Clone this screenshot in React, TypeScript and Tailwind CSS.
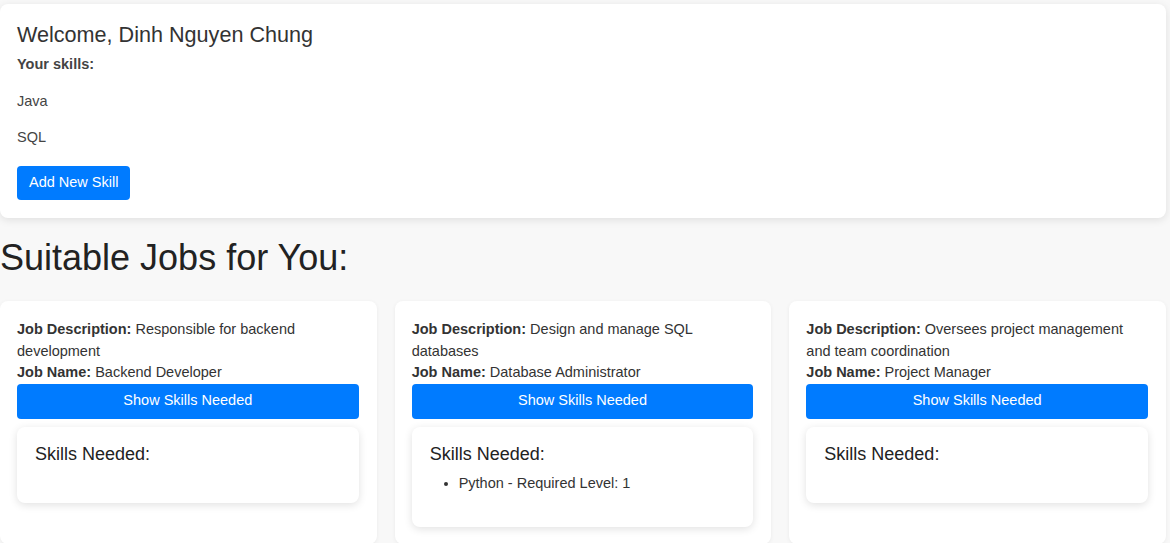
import React from "react";

interface Job {
  description: string;
  name: string;
  skills: { name: string; level: number }[];
}

const jobs: Job[] = [
  { description: "Responsible for backend development", name: "Backend Developer", skills: [] },
  { description: "Design and manage SQL databases", name: "Database Administrator", skills: [{ name: "Python", level: 1 }] },
  { description: "Oversees project management and team coordination", name: "Project Manager", skills: [] },
];

function JobCard({ job }: { job: Job }) {
  return (
    <div className="bg-white rounded-lg pl-[17px] pr-[18px] pt-[18px] pb-[17px] shadow-[0_1px_4px_rgba(0,0,0,0.06)]">
      <p className="text-[14.5px] leading-[21.5px] text-[#333]">
        <strong>Job Description:</strong> {job.description}
      </p>
      <p className="text-[14.5px] leading-[21.5px] text-[#333]">
        <strong>Job Name:</strong> {job.name}
      </p>
      <button className="w-full h-[35px] bg-[#007bff] text-white text-[14.5px] rounded">
        Show Skills Needed
      </button>
      <div className="mt-[8px] bg-white rounded-lg px-[18px] pt-[17px] pb-[18px] shadow-[0_2px_8px_rgba(0,0,0,0.12)]">
        <h3 className="text-[18px] leading-[21px] text-[#222]">Skills Needed:</h3>
        {job.skills.length > 0 ? (
          <ul className="list-disc pl-[29px] mt-[10px] mb-[18px] text-[14.5px] leading-4 text-[#333]">
            {job.skills.map((s) => (
              <li key={s.name}>
                {s.name} - Required Level: {s.level}
              </li>
            ))}
          </ul>
        ) : (
          <div className="h-[20px]" />
        )}
      </div>
    </div>
  );
}

export default function App() {
  return (
    <div className="min-h-[543px] bg-[#f8f8f8] font-['Liberation_Sans',Arial,sans-serif] pt-[4px]">
      <div className="w-[1166px]">
        {/* Welcome card */}
        <div className="bg-white rounded-lg px-[17px] pt-[18px] pb-[18px] shadow-[0_2px_8px_rgba(0,0,0,0.1)]">
          <h2 className="text-[21.6px] leading-[25px] text-[#333] mb-[9px]">Welcome, Dinh Nguyen Chung</h2>
          <p className="text-[14.5px] leading-4 font-bold text-[#444]">Your skills:</p>
          <p className="text-[14.5px] leading-4 text-[#444] mt-[21px]">Java</p>
          <p className="text-[14.5px] leading-4 text-[#444] mt-[20px]">SQL</p>
          <button className="mt-[21px] h-[34px] px-3 bg-[#007bff] text-white text-[14.5px] rounded">Add New Skill</button>
        </div>

        <h1 className="mt-[19px] text-[36px] leading-[41px] text-[#222]">Suitable Jobs for You:</h1>

        <div className="mt-[23px] grid grid-cols-3 gap-[18px]">
          {jobs.map((j) => (
            <JobCard key={j.name} job={j} />
          ))}
        </div>
      </div>
    </div>
  );
}
